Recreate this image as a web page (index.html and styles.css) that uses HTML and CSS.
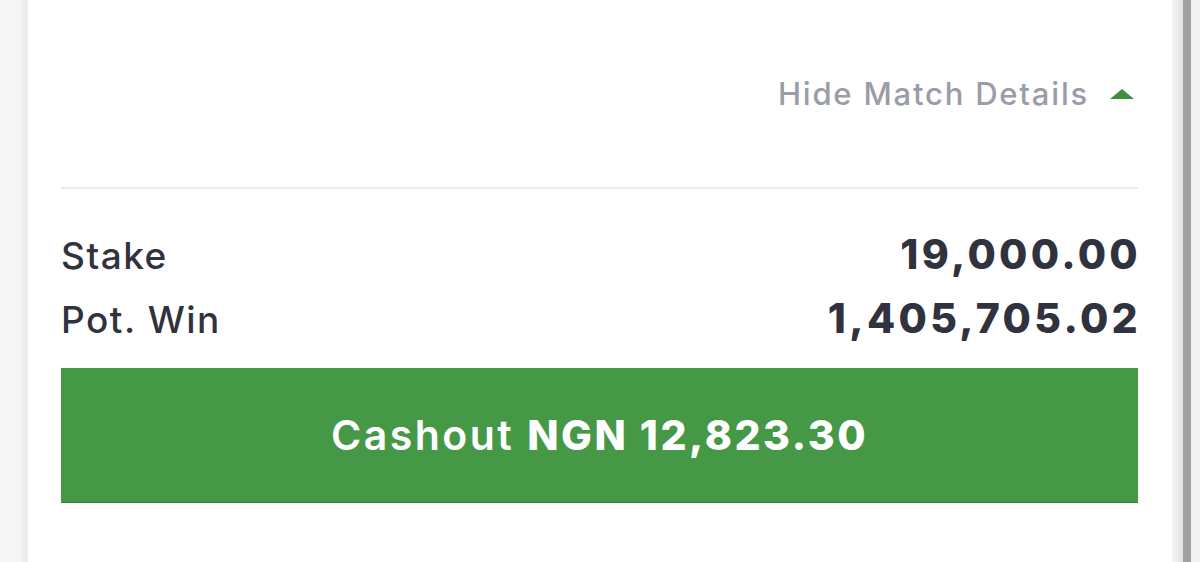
FILE: index.html
```html
<!DOCTYPE html>
<html>
<head>
<meta charset="utf-8">
<link rel="stylesheet" href="styles.css">
</head>
<body>
<div class="page">
  <div class="edge-left"></div>
  <main class="card">
    <div class="toggle">
      <span class="toggle-label">Hide Match Details</span>
      <svg class="caret" width="24" height="10" viewBox="0 0 24 10"><polygon points="0,10 12,0 24,10" fill="#3e8e3e"/></svg>
    </div>
    <div class="divider"></div>
    <div class="summary">
      <div class="row"><span class="label">Stake</span><span class="value">19,000.00</span></div>
      <div class="row"><span class="label">Pot. Win</span><span class="value">1,405,705.02</span></div>
    </div>
    <button class="cashout">Cashout <strong>NGN 12,823.30</strong></button>
  </main>
  <div class="edge-right">
    <div class="shade"></div>
    <div class="bar"></div>
    <div class="outer"></div>
  </div>
</div>
</body>
</html>
```
FILE: styles.css
```css
* { box-sizing: border-box; }
html, body { margin: 0; padding: 0; }
body {
  width: 1200px;
  height: 562px;
  overflow: hidden;
  background: #f6f6f6;
  font-family: Inter, "Noto Sans", "Liberation Sans", sans-serif;
}
.page {
  display: flex;
  height: 562px;
}
.edge-left {
  width: 28px;
  flex: none;
  background: linear-gradient(to right, #f7f7f7 0, #f5f5f5 20px, #e9e9e9 26px, #f0f0f0 28px);
}
.card {
  flex: 1;
  background: #ffffff;
  padding: 0 34px 0 33px;
  display: flex;
  flex-direction: column;
}
.toggle {
  height: 187px;
  display: flex;
  justify-content: flex-end;
  align-items: center;
  gap: 21px;
  padding-right: 4px;
}
.toggle-label {
  font-size: 31px;
  font-weight: 500;
  color: #9a9ca8;
  letter-spacing: 1.8px;
}
.caret { display: block; }
.divider {
  height: 2px;
  background: #e9e9ee;
}
.summary {
  padding-top: 40px;
  display: flex;
  flex-direction: column;
}
.row {
  display: flex;
  justify-content: space-between;
  align-items: baseline;
  height: 64px;
}
.label {
  font-size: 37px;
  font-weight: 500;
  color: #30333e;
  letter-spacing: 1.5px;
}
.value {
  font-size: 41px;
  font-weight: 800;
  color: #30333e;
  letter-spacing: 3.3px;
  margin-right: -3px;
}
.cashout {
  margin-top: 11px;
  height: 134px;
  border: none;
  border-radius: 0;
  background: #459845;
  color: #ffffff;
  font-family: inherit;
  font-size: 41px;
  font-weight: 600;
  letter-spacing: 2.5px;
  box-shadow: 0 1px 0 #3d7a3d;
  padding: 0;
}
.cashout strong { font-weight: 800; }
.edge-right {
  width: 28px;
  flex: none;
  display: flex;
}
.shade {
  width: 11px;
  background: linear-gradient(to right, #f4f4f4, #e3e3e3);
}
.bar {
  width: 8px;
  background: #a2a2a2;
}
.outer {
  flex: 1;
  background: #f2f2f2;
}
```
